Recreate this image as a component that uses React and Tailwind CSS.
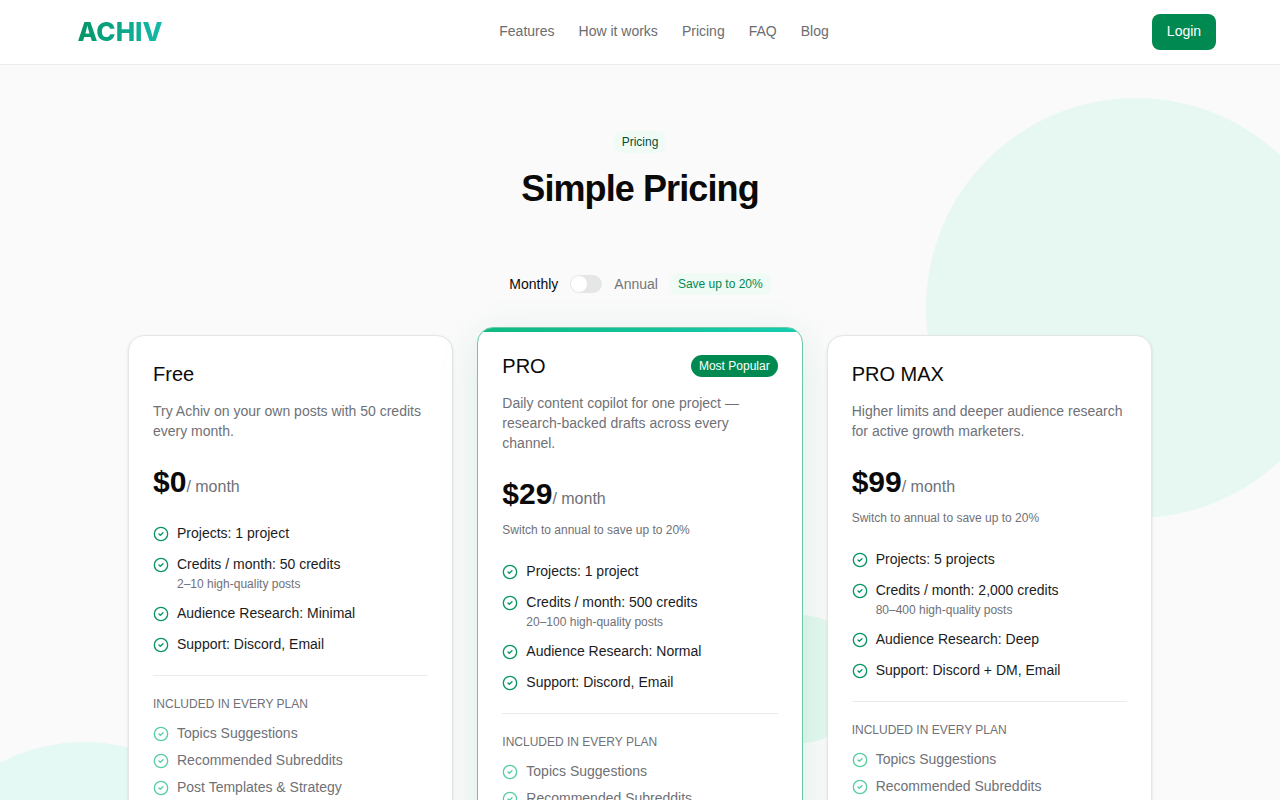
import React, { useState } from 'react';
import { CircleCheck } from 'lucide-react';

const navLinks = ['Features', 'How it works', 'Pricing', 'FAQ', 'Blog'];

const included = [
  'Topics Suggestions',
  'Recommended Subreddits',
  'Post Templates & Strategy',
];

const plans = [
  {
    name: 'Free',
    description: 'Try Achiv on your own posts with 50 credits every month.',
    price: '$0',
    features: [
      { text: 'Projects: 1 project' },
      { text: 'Credits / month: 50 credits', note: '2–10 high-quality posts' },
      { text: 'Audience Research: Minimal' },
      { text: 'Support: Discord, Email' },
    ],
  },
  {
    name: 'PRO',
    description:
      'Daily content copilot for one project — research-backed drafts across every channel.',
    price: '$29',
    hint: 'Switch to annual to save up to 20%',
    popular: true,
    features: [
      { text: 'Projects: 1 project' },
      { text: 'Credits / month: 500 credits', note: '20–100 high-quality posts' },
      { text: 'Audience Research: Normal' },
      { text: 'Support: Discord, Email' },
    ],
  },
  {
    name: 'PRO MAX',
    description:
      'Higher limits and deeper audience research for active growth marketers.',
    price: '$99',
    hint: 'Switch to annual to save up to 20%',
    features: [
      { text: 'Projects: 5 projects' },
      { text: 'Credits / month: 2,000 credits', note: '80–400 high-quality posts' },
      { text: 'Audience Research: Deep' },
      { text: 'Support: Discord + DM, Email' },
    ],
  },
];

function Header() {
  return (
    <header className="relative border-b border-[#ebebeb] bg-white">
      <div className="mx-auto flex h-16 max-w-6xl items-center justify-between">
        <a
          href="#"
          className="w-28 bg-linear-to-r from-[#059669] from-15% to-[#14b8a6] to-85% bg-clip-text text-center font-[family-name:Inter] text-[26px] leading-8 font-extrabold text-transparent"
        >
          ACHIV
        </a>
        <nav className="flex gap-6 pb-0.5 text-sm text-[#6b6d70]">
          {navLinks.map((link) => (
            <a key={link} href="#">
              {link}
            </a>
          ))}
        </nav>
        <button className="h-9 w-16 rounded-lg bg-[#008a52] pb-0.5 text-sm text-white">
          Login
        </button>
      </div>
    </header>
  );
}

function BillingToggle({ annual, onChange }) {
  return (
    <div className="flex items-center justify-center gap-3 text-sm">
      <label htmlFor="billing" className="text-[#0a0a0a]">
        Monthly
      </label>
      <input
        id="billing"
        type="checkbox"
        role="switch"
        checked={annual}
        onChange={(e) => onChange(e.target.checked)}
        className="h-[18px] w-8 appearance-none rounded-full bg-[#e4e7e6] p-px before:block before:size-4 before:rounded-full before:bg-white checked:bg-[#008a52] checked:before:translate-x-3.5"
      />
      <label htmlFor="billing" className="text-[#737679]">
        Annual
      </label>
      <span className="rounded-lg bg-[#f0fbf5] px-2 py-[3px] text-xs text-[#008a52]">
        Save up to 20%
      </span>
    </div>
  );
}

function PlanCard({ plan }) {
  return (
    <div
      className={`relative overflow-hidden rounded-2xl border bg-white p-6 ${
        plan.popular
          ? '-mt-2 mb-2 border-[#6bc9a3] shadow-[0_8px_40px_rgba(5,150,105,0.12)]'
          : 'border-[#e4e7e6] shadow-sm'
      }`}
    >
      {plan.popular && (
        <div className="absolute inset-x-0 top-0 h-1 bg-linear-to-r from-[#10b981] to-[#14ccb0]" />
      )}
      <div className="flex items-center justify-between">
        <h3 className="text-xl leading-7 text-[#0a0a0a]">{plan.name}</h3>
        {plan.popular && (
          <span className="rounded-full bg-[#008a52] px-2 py-[3px] text-xs text-white">
            Most Popular
          </span>
        )}
      </div>
      <p className="mt-[13px] text-sm text-[#6f7177]">{plan.description}</p>
      <p className="mt-[23px] flex items-baseline">
        <span className="text-3xl font-bold text-[#0a0a0a]">{plan.price}</span>
        <span className="text-base text-[#6f7177]">/ month</span>
      </p>
      {plan.hint && <p className="mt-2.5 text-xs text-[#6f7177]">{plan.hint}</p>}

      <ul className="mt-[23px] flex flex-col gap-[11px] text-sm text-[#1c1c1e]">
        {plan.features.map(({ text, note }) => (
          <li key={text} className="flex gap-2">
            <CircleCheck className="mt-[3px] size-4 shrink-0 text-[#079563]" />
            <div>
              <p>{text}</p>
              {note && <p className="mt-0.5 text-xs text-[#6f7177]">{note}</p>}
            </div>
          </li>
        ))}
      </ul>

      <div className="mt-[21px] border-t border-[#ebebeb] pt-5 text-[#6f7177]">
        <p className="text-xs uppercase">Included in every plan</p>
        <ul className="mt-[11px] flex flex-col gap-[7px] text-sm">
          {included.map((item) => (
            <li key={item} className="flex gap-2">
              <CircleCheck className="mt-[3px] size-4 shrink-0 text-[#56cfa0]" />
              {item}
            </li>
          ))}
        </ul>
      </div>
    </div>
  );
}

export default function App() {
  const [annual, setAnnual] = useState(false);

  return (
    <div className="relative min-h-screen overflow-hidden bg-[#fafafa] font-['Liberation_Sans',Arial,sans-serif]">
      {/* Decorative background circles */}
      <div className="absolute top-[98px] -right-[66px] size-[420px] rounded-full bg-[#e6f8f1]" />
      <div className="absolute top-[742px] -left-[96px] size-[360px] rounded-full bg-[#e4f8f4]" />
      <div className="absolute top-[615px] left-[calc(50%+96px)] size-32 rounded-full bg-[#e4f7ee]" />

      <Header />

      <main className="relative mx-auto max-w-5xl pt-[66px] pb-16">
        <div className="flex flex-col items-center">
          <span className="rounded-lg bg-[#f0fbf5] px-2 py-[3px] text-xs text-[#064e3b]">
            Pricing
          </span>
          <h1 className="mt-4 text-4xl font-bold tracking-tight text-[#0a0a0a]">
            Simple Pricing
          </h1>
        </div>
        <div className="mt-16">
          <BillingToggle annual={annual} onChange={setAnnual} />
        </div>
        <div className="mt-10 grid grid-cols-3 items-start gap-6">
          {plans.map((plan) => (
            <PlanCard key={plan.name} plan={plan} />
          ))}
        </div>
      </main>
    </div>
  );
}
